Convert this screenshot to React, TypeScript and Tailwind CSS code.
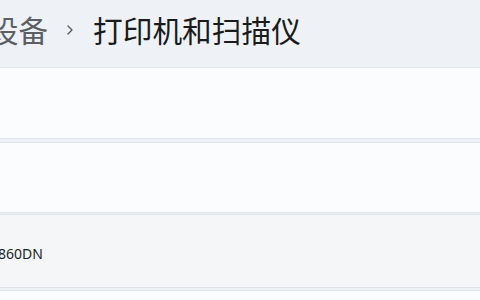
export default function App() {
  const font = { fontFamily: '"Noto Sans CJK SC", "Noto Sans", sans-serif' };
  return (
    <div className="w-[480px] h-[300px] overflow-hidden bg-[#eef2f6] flex flex-col" style={font}>
      <div className="h-[67px] flex items-center shrink-0">
        <div className="flex items-center ml-[-11px] mt-[-7px]">
          <span className="text-[29.5px] leading-none text-[#5c5f63]">设备</span>
          <svg className="ml-[19px] mr-[20px]" width="6" height="10" viewBox="0 0 6 10">
            <polyline points="1,1 5,5 1,9" fill="none" stroke="#55585c" strokeWidth="1.3" strokeLinecap="round" strokeLinejoin="round" />
          </svg>
          <span className="text-[29.7px] leading-none text-[#1b1b1b]">打印机和扫描仪</span>
        </div>
      </div>
      <div className="flex flex-col -mx-2">
        <div className="h-[72px] border-y border-[#dfe5eb] bg-[#fbfcfd] shrink-0" />
        <div className="h-[71px] mt-[3px] border-y border-[#dfe5eb] bg-[#fbfcfd] shrink-0" />
        <div className="h-[74px] mt-[1px] border-y border-[#dde3e8] bg-[#f4f6f8] shrink-0 flex items-center">
          <span className="ml-[6px] text-[14px] text-[#1f1f1f] mt-[4px]" style={{ fontFamily: '"Noto Sans", "Open Sans", sans-serif' }}>860DN</span>
        </div>
        <div className="h-[72px] mt-[2px] border-y border-[#dfe5eb] bg-[#fbfcfd] shrink-0" />
      </div>
    </div>
  );
}
